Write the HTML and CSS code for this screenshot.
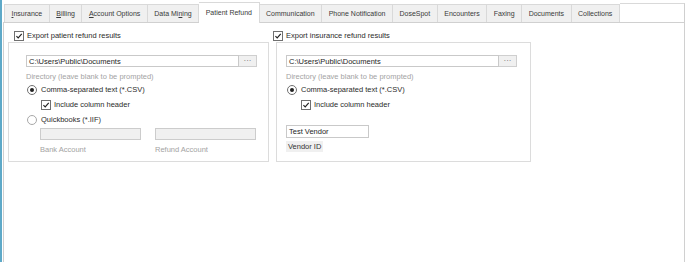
FILE: index.html
```html
<!DOCTYPE html>
<html lang="en">
<head>
    <meta charset="UTF-8">
    <meta name="viewport" content="width=device-width, initial-scale=1.0">
    <title>Patient Refund</title>
    <link rel="stylesheet" href="styles.css">
</head>
<body>
    <div class="window">
        <div class="tabs">
            <div class="tab"><u>I</u>nsurance</div>
            <div class="tab"><u>B</u>illing</div>
            <div class="tab"><u>A</u>ccount Options</div>
            <div class="tab">Data Mi<u>n</u>ing</div>
            <div class="tab active">Patient Refund</div>
            <div class="tab">Communication</div>
            <div class="tab">Phone Notification</div>
            <div class="tab">DoseSpot</div>
            <div class="tab">Encounters</div>
            <div class="tab">Faxing</div>
            <div class="tab">Documents</div>
            <div class="tab">Collections</div>
            <div class="tab-fill"></div>
        </div>

        <div class="panel">
            <div class="groups">
                <!-- patient refunds -->
                <div class="group group-left">
                    <div class="group-title">
                        <span class="check"><svg viewBox="0 0 9 9"><path d="M1.6 4.6 L3.6 6.6 L7.6 2"/></svg></span>
                        Export patient refund results
                    </div>
                    <div class="group-box">
                        <div class="path-row">
                            <div class="input">C:\Users\Public\Documents</div>
                            <div class="browse">···</div>
                        </div>
                        <div class="hint">Directory (leave blank to be prompted)</div>
                        <div class="option"><span class="radio on"></span>Comma-separated text (*.CSV)</div>
                        <div class="option sub">
                            <span class="check"><svg viewBox="0 0 9 9"><path d="M1.6 4.6 L3.6 6.6 L7.6 2"/></svg></span>
                            Include column header
                        </div>
                        <div class="option"><span class="radio"></span>Quickbooks (*.IIF)</div>
                        <div class="accounts">
                            <div class="account">
                                <div class="input disabled"></div>
                                <div class="hint">Bank Account</div>
                            </div>
                            <div class="account">
                                <div class="input disabled"></div>
                                <div class="hint">Refund Account</div>
                            </div>
                        </div>
                    </div>
                </div>

                <!-- insurance refunds -->
                <div class="group group-right">
                    <div class="group-title">
                        <span class="check"><svg viewBox="0 0 9 9"><path d="M1.6 4.6 L3.6 6.6 L7.6 2"/></svg></span>
                        Export insurance refund results
                    </div>
                    <div class="group-box">
                        <div class="path-row">
                            <div class="input">C:\Users\Public\Documents</div>
                            <div class="browse">···</div>
                        </div>
                        <div class="hint">Directory (leave blank to be prompted)</div>
                        <div class="option"><span class="radio on"></span>Comma-separated text (*.CSV)</div>
                        <div class="option sub">
                            <span class="check"><svg viewBox="0 0 9 9"><path d="M1.6 4.6 L3.6 6.6 L7.6 2"/></svg></span>
                            Include column header
                        </div>
                        <div class="vendor">
                            <div class="input">Test Vendor</div>
                            <div class="vendor-label">Vendor ID</div>
                        </div>
                    </div>
                </div>
            </div>
        </div>
    </div>
</body>
</html>
```

FILE: styles.css
```css
body {
    margin: 0;
    padding: 0;
    background-color: #fff;
    font-family: "Liberation Sans", Arial, sans-serif;
    font-size: 7.5px;
    color: #2b2b2b;
}
.window {
    height: 262px;
    border-left: 2px solid #5ea9c8;
    padding-top: 3px;
    box-sizing: border-box;
    display: flex;
    flex-direction: column;
}
.tabs {
    display: flex;
    align-items: flex-end;
    height: 19px;
    padding-left: 2px;
    font-size: 7px;
}
.tab {
    height: 18px;
    line-height: 18px;
    padding: 0 6.5px;
    background-color: #f0f0f0;
    border: 1px solid #d9d9d9;
    border-left: none;
    border-bottom: none;
    color: #3a3a3a;
    white-space: nowrap;
    box-sizing: border-box;
}
.tab:first-child {
    border-left: 1px solid #d9d9d9;
}
.tab.active {
    height: 21px;
    line-height: 20px;
    background-color: #fff;
    margin-bottom: -1px;
    position: relative;
}
.tab-fill {
    flex: 1;
    align-self: stretch;
    border-top: 1px solid #d9d9d9;
    border-right: 1px solid #cfcfcf;
    margin-right: 3px;
}
.panel {
    flex: 1;
    border: 1px solid #d0d0d0;
    border-bottom: none;
    margin-left: 1px;
    margin-right: 3px;
    background-color: #fff;
}
.groups {
    display: flex;
    padding: 7px 0 0 4px;
    gap: 4px;
}
.group-title {
    display: flex;
    align-items: center;
    height: 11px;
    gap: 3px;
}
.group-left .group-title {
    padding-left: 6px;
}
.group-box {
    border: 1px solid #dcdcdc;
    margin-top: 1px;
    height: 120px;
    box-sizing: border-box;
}
.group-left .group-box {
    width: 261px;
    padding: 12px 11px 0 17px;
}
.group-right .group-box {
    width: 255px;
    margin-left: 3px;
    padding: 12px 13px 0 9px;
}
.check {
    width: 8px;
    height: 8px;
    border: 1px solid #707070;
    background-color: #fff;
    display: inline-block;
}
.check svg {
    display: block;
    width: 8px;
    height: 8px;
}
.check path {
    fill: none;
    stroke: #222;
    stroke-width: 1.3;
}
.path-row {
    display: flex;
    height: 12px;
}
.input {
    flex: 1;
    height: 12px;
    line-height: 11px;
    border: 1px solid #c9c9c9;
    padding-left: 2px;
    box-sizing: border-box;
    background-color: #fff;
    color: #1e1e1e;
}
.input.disabled {
    background-color: #f0f0f0;
    border-color: #cccccc;
}
.browse {
    width: 18px;
    height: 12px;
    line-height: 9px;
    text-align: center;
    background-color: #f0f0f0;
    border: 1px solid #cfcfcf;
    border-left: none;
    box-sizing: border-box;
    color: #666;
    font-size: 8px;
}
.hint {
    color: #a3a3a3;
    margin-top: 5px;
    height: 10px;
}
.option {
    display: flex;
    align-items: center;
    height: 15px;
    gap: 4px;
    margin-left: 1px;
}
.option.sub {
    margin-left: 15px;
    gap: 3px;
}
.radio {
    width: 8px;
    height: 8px;
    border: 1px solid #a8a8a8;
    border-radius: 50%;
    background-color: #fff;
    display: inline-block;
    position: relative;
}
.radio.on {
    border-color: #707070;
}
.radio.on::after {
    content: "";
    position: absolute;
    left: 2px;
    top: 2px;
    width: 4px;
    height: 4px;
    border-radius: 50%;
    background-color: #222;
}
.accounts {
    display: flex;
    gap: 14px;
    padding-left: 14px;
    margin-top: 1px;
}
.account {
    width: 101px;
}
.account .input {
    flex: none;
}
.account .hint {
    margin-top: 5px;
}
.vendor {
    margin-top: 13px;
    width: 83px;
}
.vendor .input {
    height: 13px;
    line-height: 12px;
}
.vendor-label {
    display: inline-block;
    margin-top: 3px;
    padding: 1px 2px;
    background-color: #f0f0f0;
    color: #333;
}
```
